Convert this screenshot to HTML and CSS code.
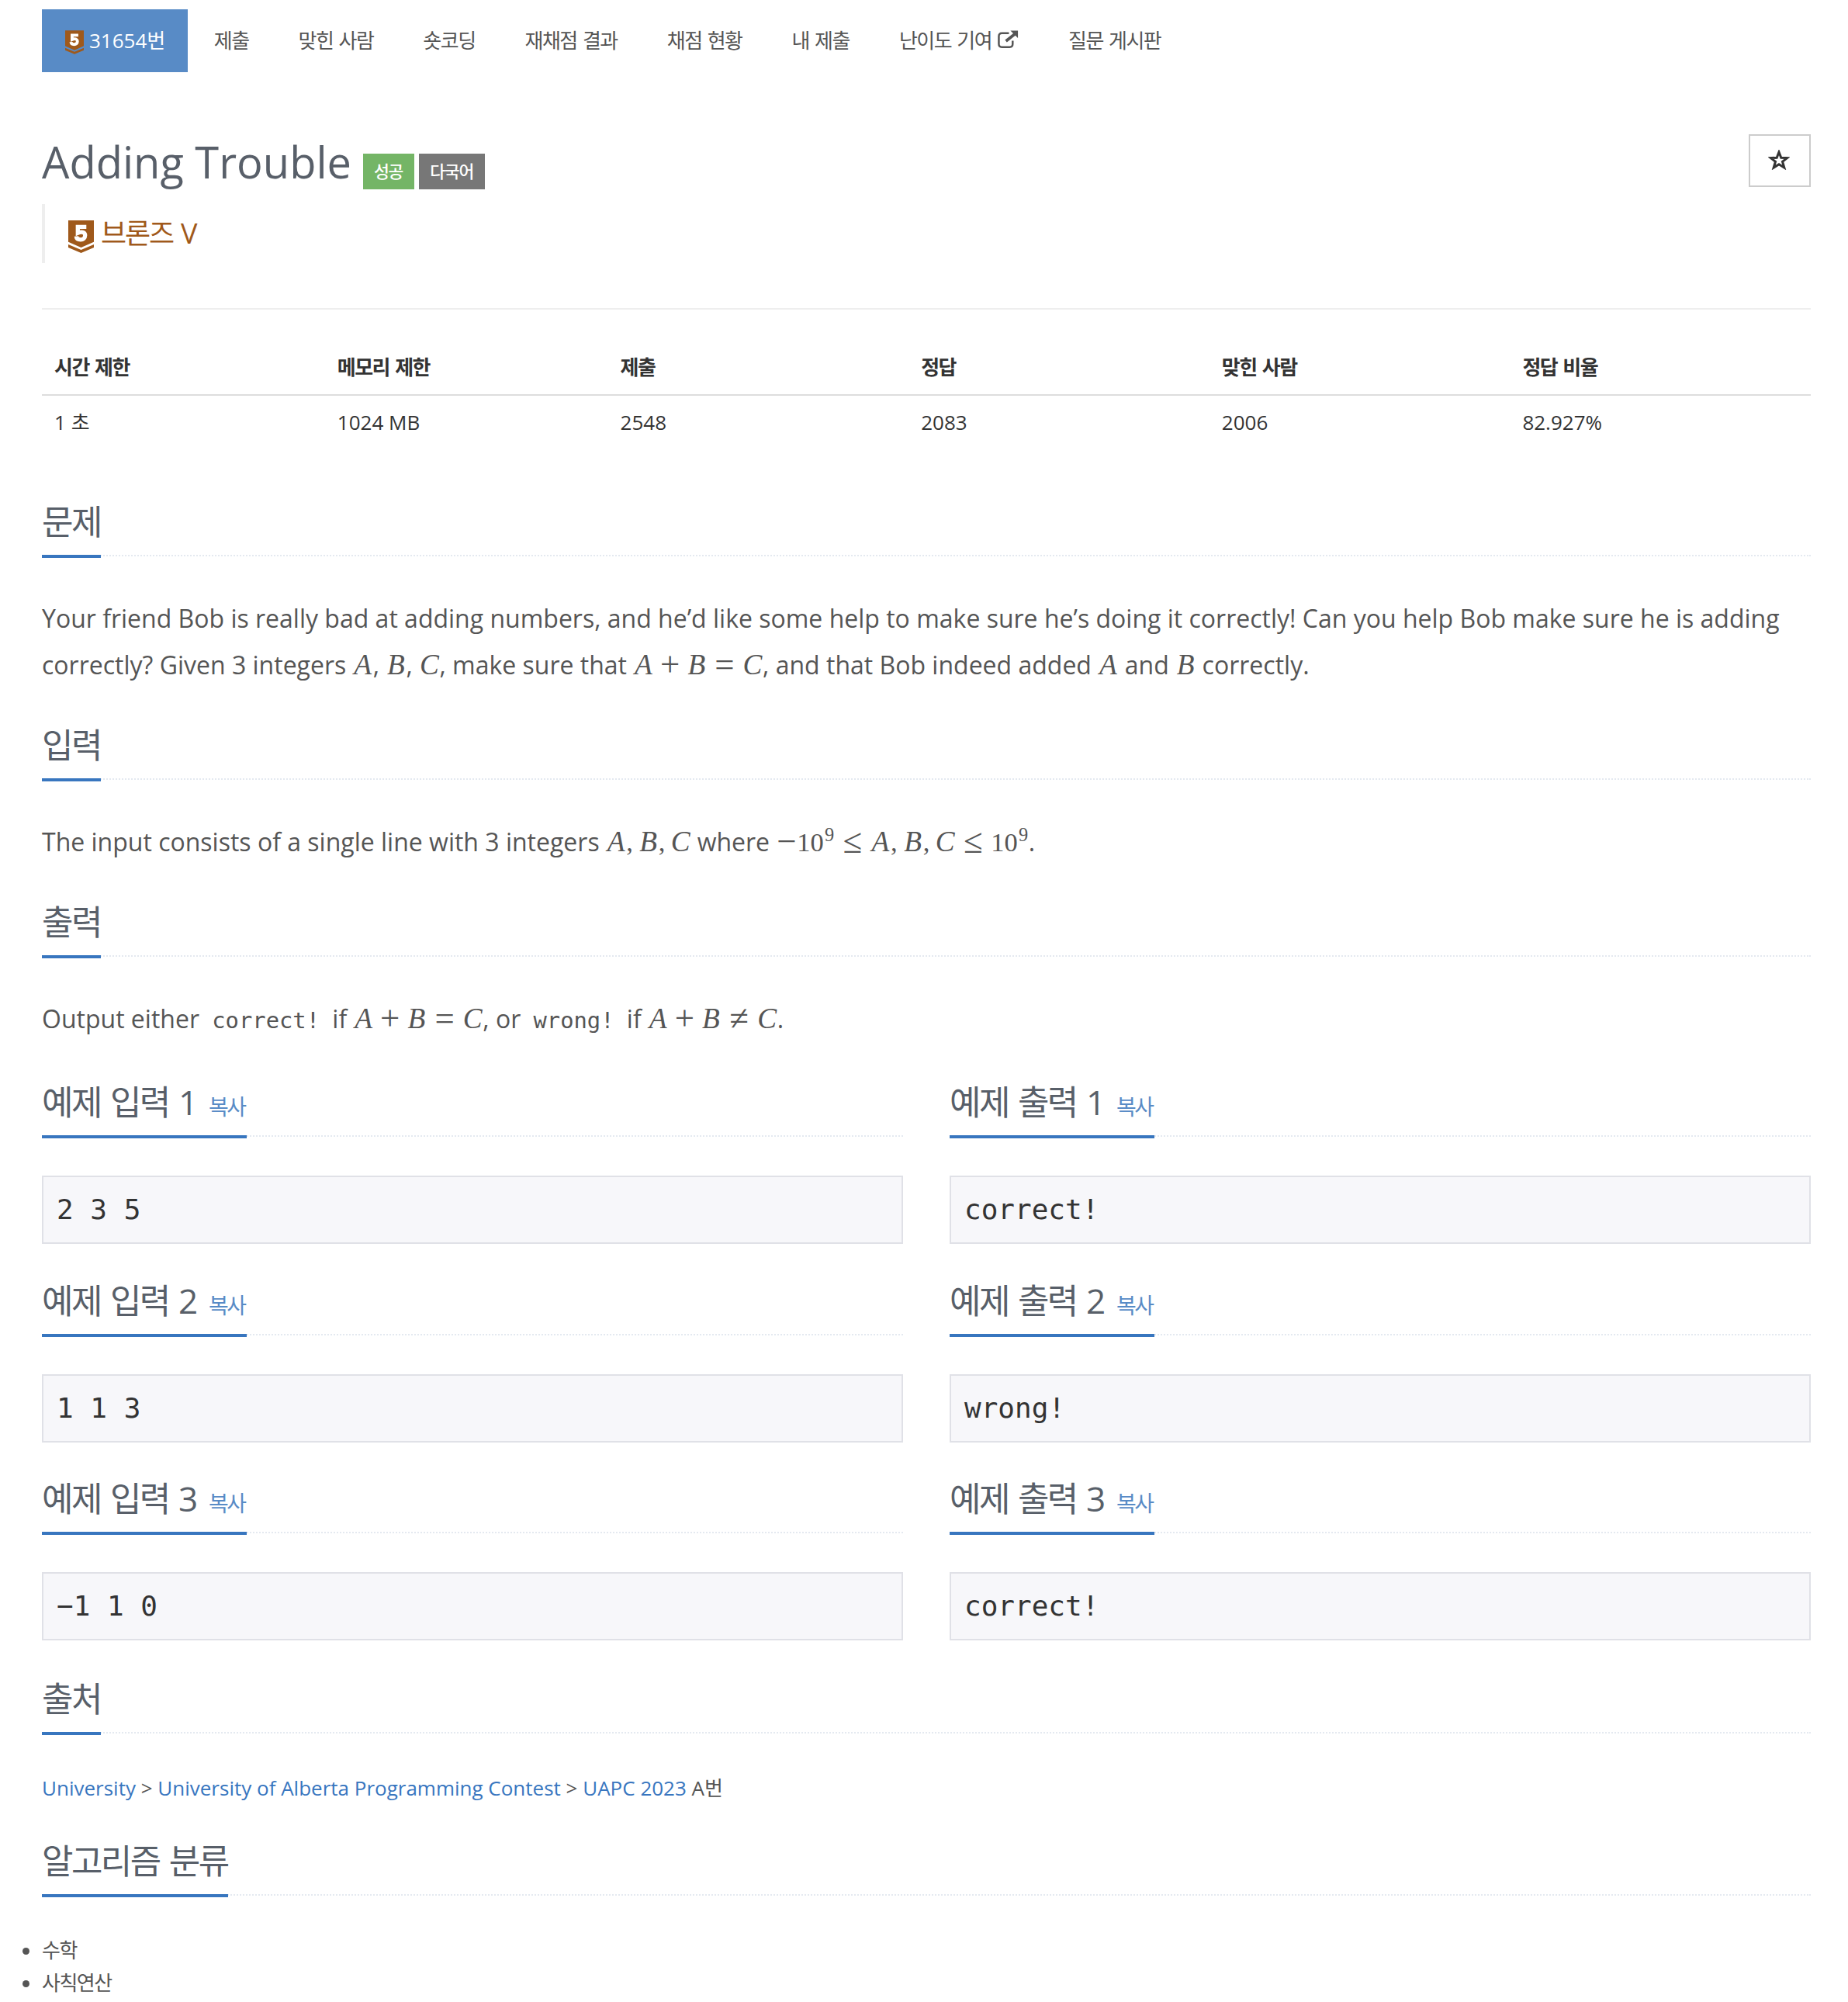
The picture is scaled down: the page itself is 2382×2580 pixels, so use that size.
FILE: index.html
```
<!DOCTYPE html>
<html lang="ko">
<head>
<meta charset="utf-8">
<title>31654번: Adding Trouble</title>
<link rel="stylesheet" href="styles.css">
</head>
<body>
<svg class="defs" width="0" height="0" aria-hidden="true">
  <symbol id="tier" viewBox="0 0 33 42">
    <path class="tier-fill" d="M0 0H33V27.700L16.500 35 0 27.700Z"/>
    <path class="tier-fill" d="M0 31L16.500 38 33 31V35L16.500 42 0 35Z"/>
    <path class="tier-digit" d="M23.300 8.400H12.300V16.200C19 13.400 21.700 16.500 21.700 19.300C21.700 23 19 24.800 16 24.800C13 24.800 10.500 23.500 10.300 20.500"/>
  </symbol>
</svg>
<main class="page">
  <nav class="menu ko">
    <a class="menu-item active"><svg class="tier-sm"><use href="#tier"/></svg><span><span class="latin">31654</span>번</span></a>
    <a class="menu-item">제출</a>
    <a class="menu-item">맞힌 사람</a>
    <a class="menu-item">숏코딩</a>
    <a class="menu-item">재채점 결과</a>
    <a class="menu-item">채점 현황</a>
    <a class="menu-item">내 제출</a>
    <a class="menu-item">난이도 기여<svg class="ext" viewBox="0 0 28 24"><path class="ext-box" d="M15 3.500H5.500Q1.500 3.500 1.500 7.500V18Q1.500 22 5.500 22H16Q20 22 20 18V13.500"/><path class="ext-line" d="M11 14L23 4.500"/><path class="ext-head" d="M17 0H27V10Z"/></svg></a>
    <a class="menu-item">질문 게시판</a>
  </nav>

  <header class="title-row">
    <div class="title">
      <h1>Adding Trouble</h1>
      <span class="label success ko">성공</span>
      <span class="label ko">다국어</span>
    </div>
    <button class="star"><svg viewBox="0 0 28 26"><path d="M14 3L16.800 10.200 24.500 10.600 18.500 15.300 20.800 23 14 18.700 7.200 23 9.500 15.300 3.500 10.600 11.200 10.200Z"/></svg></button>
  </header>
  <blockquote class="tier-line ko"><svg class="tier-lg"><use href="#tier"/></svg>브론즈 <span class="latin">V</span></blockquote>
  <hr>

  <table class="info">
    <thead><tr class="ko"><th>시간 제한</th><th>메모리 제한</th><th>제출</th><th>정답</th><th>맞힌 사람</th><th>정답 비율</th></tr></thead>
    <tbody><tr><td>1 <span class="ko">초</span></td><td>1024 MB</td><td>2548</td><td>2083</td><td>2006</td><td>82.927%</td></tr></tbody>
  </table>

  <section class="s-problem">
    <div class="headline"><h2 class="ko">문제</h2></div>
    <p>Your friend Bob is really bad at adding numbers, and he’d like some help to make sure he’s doing it correctly! Can you help Bob make sure he is adding correctly? Given 3 integers <span class="m"><i>A</i></span>, <span class="m"><i>B</i></span>, <span class="m"><i>C</i></span>, make sure that <span class="m"><i>A</i><b>+</b><i>B</i><b class="rel">=</b><i>C</i></span>, and that Bob indeed added <span class="m"><i>A</i></span> and <span class="m"><i>B</i></span> correctly.</p>
  </section>
  <section class="s-input">
    <div class="headline"><h2 class="ko">입력</h2></div>
    <p>The input consists of a single line with 3 integers <span class="m"><i>A</i><s>,</s><i>B</i><s>,</s><i>C</i></span> where <span class="m"><b class="neg">−</b>10<sup>9</sup><b class="rel">≤</b><i>A</i><s>,</s><i>B</i><s>,</s><i>C</i><b class="rel">≤</b>10<sup>9</sup></span>.</p>
  </section>
  <section class="s-output">
    <div class="headline"><h2 class="ko">출력</h2></div>
    <p>Output either <code>correct!</code> if <span class="m"><i>A</i><b>+</b><i>B</i><b class="rel">=</b><i>C</i></span>, or <code>wrong!</code> if <span class="m"><i>A</i><b>+</b><i>B</i><b class="rel">≠</b><i>C</i></span>.</p>
  </section>

  <div class="samples">
    <section><div class="headline"><h2 class="ko">예제 입력 <span class="latin">1</span><a class="copy">복사</a></h2></div><pre>2 3 5</pre></section>
    <section><div class="headline"><h2 class="ko">예제 출력 <span class="latin">1</span><a class="copy">복사</a></h2></div><pre>correct!</pre></section>
    <section><div class="headline"><h2 class="ko">예제 입력 <span class="latin">2</span><a class="copy">복사</a></h2></div><pre>1 1 3</pre></section>
    <section><div class="headline"><h2 class="ko">예제 출력 <span class="latin">2</span><a class="copy">복사</a></h2></div><pre>wrong!</pre></section>
    <section><div class="headline"><h2 class="ko">예제 입력 <span class="latin">3</span><a class="copy">복사</a></h2></div><pre>−1 1 0</pre></section>
    <section><div class="headline"><h2 class="ko">예제 출력 <span class="latin">3</span><a class="copy">복사</a></h2></div><pre>correct!</pre></section>
  </div>

  <section class="s-source">
    <div class="headline"><h2 class="ko">출처</h2></div>
    <p class="source"><a>University</a> &gt; <a>University of Alberta Programming Contest</a> &gt; <a>UAPC 2023</a> A<span class="ko">번</span></p>
  </section>
  <section>
    <div class="headline"><h2 class="ko">알고리즘 분류</h2></div>
    <ul class="tags ko"><li>수학</li><li>사칙연산</li></ul>
  </section>
</main>
</body>
</html>
```
FILE: styles.css
```
* { box-sizing: border-box; }
body {
  margin: 0;
  background: #fff;
  color: #555;
  font: 26px/42px "Open Sans", "Noto Sans CJK KR", sans-serif;
}
.defs { display: block; }
.page { width: 2382px; height: 2580px; padding: 12px 48px 0 54px; overflow: hidden; }
/* Hangul is set a little tighter than the font's own advance */
.ko { letter-spacing: -0.0585em; word-spacing: 0.075em; }
.latin { letter-spacing: 0; word-spacing: 0; }

.menu { display: flex; gap: 4px; height: 81px; }
.menu-item { display: flex; align-items: center; padding: 0 30px 2px; height: 81px; white-space: pre; }
.active { background: #588bc6; color: #fff; }
.tier-fill { fill: #9f591b; }
.tier-digit { fill: none; stroke: #fff; stroke-width: 5.300; }
.tier-sm { width: 24px; height: 31px; margin: 5px 7px 0 0; }
.ext { width: 27px; height: 24px; margin: 0 0 1px 8px; }
.ext-box { fill: none; stroke: #555; stroke-width: 2.600; }
.ext-line { fill: none; stroke: #555; stroke-width: 4; }
.ext-head { fill: #555; }

.title-row { display: flex; justify-content: space-between; margin-top: 80px; width: 2280px; height: 90px; }
.title { display: flex; }
h1 { margin: -11px 15px 0 0; font-size: 56px; line-height: 92px; font-weight: 400; color: #585f69; }
.label { height: 46px; margin: 25px 6px 0 0; padding: 0 15px 0 14px; background: #777; color: #fff; font-size: 21.600px; font-weight: 500; line-height: 46px; }
.success { background: #74b566; }
.star { width: 80px; height: 68px; padding: 0; border: 2px solid #ccc; background: #fff; }
.star svg { display: block; width: 28px; height: 26px; margin: 0 auto 2px 23px; }
.star path { fill: none; stroke: #333; stroke-width: 3; }
.tier-line { display: flex; align-items: center; width: 2280px; height: 76px; margin: 0; padding-left: 30px; border-left: 4px solid #eee; font-size: 36px; color: #a0591a; white-space: pre; }
.tier-lg { width: 33px; height: 42px; margin: 8px 9px 0 0; }
hr { width: 2280px; height: 2px; margin: 58px 0 0; border: 0; background: #eee; }

.info { width: 2280px; margin-top: 41px; border-collapse: separate; border-spacing: 0; table-layout: fixed; color: #333; text-align: left; }
.info th { height: 70px; padding: 0 16px 2px; border-bottom: 2px solid #ddd; width: 17%; }
.info th:nth-child(-n+2) { width: 16%; }
.info td { height: 70px; padding: 0 16px 2px; }

section { width: 2280px; }
.headline { height: 80px; border-bottom: 2px dotted #e4e9f0; }
.headline h2 { display: inline-block; height: 82px; margin: 0; border-bottom: 4px solid #3876bf; font-size: 44px; line-height: 70px; font-weight: 400; color: #585f69; white-space: pre; }
.s-problem { margin-top: 57px; height: 288px; }
.s-input { height: 228px; }
.s-output { height: 232px; }
.s-source { height: 209px; }
p { margin: 50px 0 0; font-size: 32px; line-height: 60px; }
.source { margin-top: 47px; font-size: 26px; line-height: 46px; }
.source a { color: #3876bf; }
code { padding: 0 8px; font: 28.800px "DejaVu Sans Mono", monospace; }

/* Inline formulas: advances follow the usual maths spacing */
.m { font: 34.500px/1 "Liberation Serif", serif; white-space: nowrap; }
.m i { display: inline-block; width: .704em; font-size: 1.080em; text-align: center; }
.m b { display: inline-block; width: .94em; font-size: 1.300em; line-height: 34px; text-align: center; font-weight: 400; vertical-align: -2px; }
.m .rel { width: 1.026em; }
.m .neg { width: .598em; }
.m s { display: inline-block; width: .445em; text-decoration: none; }
.m sup { display: inline-block; width: .58em; padding-left: .05em; font-size: .707em; line-height: 0; vertical-align: .52em; }

.samples { display: grid; grid-template-columns: 1110px 1110px; column-gap: 60px; grid-template-rows: 256px 255px 258px; height: 769px; }
.samples section { width: auto; }
.copy { margin-left: 14px; padding-right: 3px; font-size: 28px; color: #588bc6; }
pre { margin: 50px 0 0; height: 88px; padding: 0 17px; border: 2px solid #e0e1e7; background: #f7f7fa; color: #333; font: 36px/84px "DejaVu Sans Mono", monospace; }
.tags { margin: 49px 0 0; padding: 0; line-height: 42px; }
```
